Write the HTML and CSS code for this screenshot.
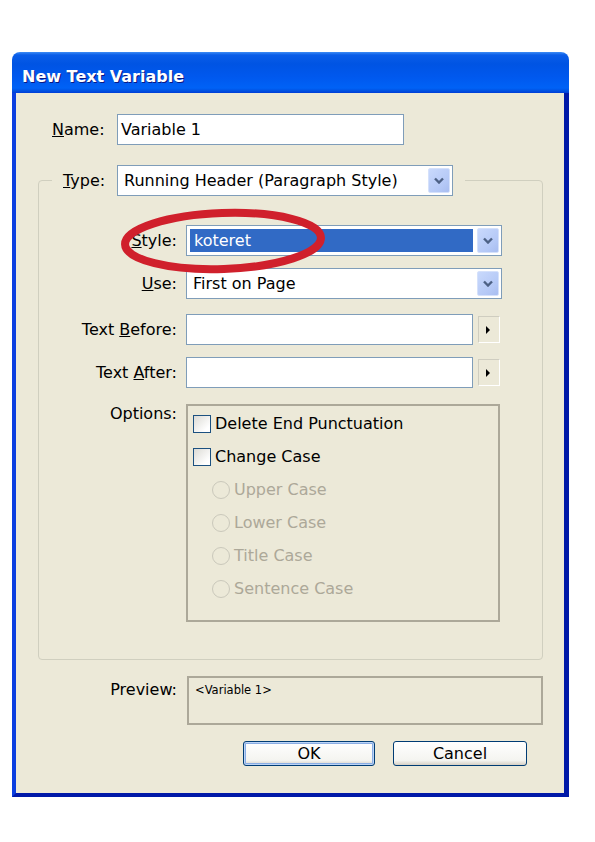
FILE: index.html
```html
<!DOCTYPE html>
<html lang="en">
<head>
  <meta charset="UTF-8" />
  <title>New Text Variable</title>
  <link rel="stylesheet" href="styles.css">
</head>
<body>

  <div class="window">
    <div class="titlebar">New Text Variable</div>

    <div class="client">
      <div class="name-row">
        <label class="name-label"><u>N</u>ame:</label>
        <div class="field name-field">Variable 1</div>
      </div>

      <fieldset class="group">
        <legend class="type-row">
          <label class="type-label"><u>T</u>ype:</label>
          <div class="combo type-combo">
            <span class="combo-value">Running Header (Paragraph Style)</span>
            <span class="drop-btn">
              <svg width="10" height="7" viewBox="0 0 10 7"><path d="M1 1.5 L5 5.5 L9 1.5" fill="none" stroke="#4d6185" stroke-width="2.4"/></svg>
            </span>
          </div>
        </legend>

        <div class="form-grid">
          <label class="row-label"><u>S</u>tyle:</label>
          <div class="combo">
            <span class="combo-value selected">koteret</span>
            <span class="drop-btn">
              <svg width="10" height="7" viewBox="0 0 10 7"><path d="M1 1.5 L5 5.5 L9 1.5" fill="none" stroke="#4d6185" stroke-width="2.4"/></svg>
            </span>
          </div>

          <label class="row-label"><u>U</u>se:</label>
          <div class="combo">
            <span class="combo-value">First on Page</span>
            <span class="drop-btn">
              <svg width="10" height="7" viewBox="0 0 10 7"><path d="M1 1.5 L5 5.5 L9 1.5" fill="none" stroke="#4d6185" stroke-width="2.4"/></svg>
            </span>
          </div>

          <label class="row-label push-3">Text <u>B</u>efore:</label>
          <div class="text-field push-3">
            <div class="field"></div>
            <span class="flyout-btn"><span class="tri"></span></span>
          </div>

          <label class="row-label">Text <u>A</u>fter:</label>
          <div class="text-field">
            <div class="field"></div>
            <span class="flyout-btn"><span class="tri"></span></span>
          </div>

          <label class="row-label options-label push-4">Options:</label>
          <div class="options push-4">
            <div class="opt"><span class="checkbox"></span>Delete End Punctuation</div>
            <div class="opt"><span class="checkbox"></span>Change Case</div>
            <div class="opt sub disabled"><span class="radio"></span>Upper Case</div>
            <div class="opt sub disabled"><span class="radio"></span>Lower Case</div>
            <div class="opt sub disabled"><span class="radio"></span>Title Case</div>
            <div class="opt sub disabled"><span class="radio"></span>Sentence Case</div>
          </div>
        </div>
      </fieldset>

      <div class="preview-row">
        <label class="preview-label">Preview:</label>
        <div class="preview-box">&lt;Variable 1&gt;</div>
      </div>

      <div class="buttons">
        <button class="btn default">OK</button>
        <button class="btn">Cancel</button>
      </div>
    </div>

    <!-- hand-drawn marker around the Style field -->
    <svg class="marker" width="215" height="75" viewBox="0 0 215 75">
      <ellipse cx="107" cy="37" rx="98" ry="28" transform="rotate(-2 107 37)" fill="none" stroke="#d0202c" stroke-width="8"/>
    </svg>
  </div>

</body>
</html>
```

FILE: styles.css
```css
body {
  margin: 0;
  background: #fff;
  font-family: 'DejaVu Sans', sans-serif;
  font-size: 16px;
  color: #000;
}

.window {
  position: relative;
  width: 557px;
  margin: 52px 0 0 12px;
}

.titlebar {
  box-sizing: border-box;
  height: 41px;
  padding: 15px 0 0 10px;
  border-radius: 8px 8px 0 0;
  background: linear-gradient(#3d8cf5 0, #0a5de8 3px, #0054e3 12px, #0058ee 60%, #0062f6 88%, #0050e0 95%, #003dd7 100%);
  color: #fff;
  font-weight: bold;
  font-size: 16px;
  line-height: 19px;
  text-shadow: 1px 1px #0a1883;
}

.client {
  background: #ece9d8;
  border-left: 4px solid #0b3fe0;
  border-right: 5px solid #0019a8;
  border-bottom: 4px solid #0019a8;
  padding: 21px 0 27px;
}

label {
  line-height: 19px;
  white-space: nowrap;
}

.field {
  box-sizing: border-box;
  height: 31px;
  background: #fff;
  border: 1px solid #7f9db9;
  padding: 0 3px;
  line-height: 29px;
}

/* name */
.name-row {
  display: flex;
  align-items: center;
  margin-left: 36px;
}

.name-label {
  width: 65px;
}

.name-field {
  width: 287px;
}

/* group */
.group {
  margin: 20px 0 0 22px;
  width: 504px;
  box-sizing: border-box;
  border: 1px solid #d0cfbf;
  border-radius: 4px;
  padding: 29px 40px 37px 13px;
}

.type-row {
  display: flex;
  align-items: center;
  padding: 0 12px 0 11px;
}

.type-label {
  width: 54px;
}

.type-combo {
  width: 336px;
}

.combo {
  box-sizing: border-box;
  height: 31px;
  display: flex;
  align-items: center;
  background: #fff;
  border: 1px solid #7f9db9;
  padding: 2px;
}

.combo-value {
  flex: 1;
  height: 23px;
  line-height: 23px;
  padding: 0 4px;
  margin-right: 4px;
  white-space: nowrap;
}

.combo-value.selected {
  background: #316ac5;
  color: #fff;
  margin-left: 1px;
}

.drop-btn {
  box-sizing: border-box;
  width: 22px;
  height: 25px;
  display: flex;
  align-items: center;
  justify-content: center;
  border: 1px solid #d5e1fb;
  border-radius: 2px;
  background: linear-gradient(135deg, #c9d9fc, #b4c8f6 70%, #a8bdf0);
}

.form-grid {
  display: grid;
  grid-template-columns: 125px 316px;
  column-gap: 9px;
  row-gap: 12px;
  align-items: center;
}

.row-label {
  text-align: right;
}

.push-3 {
  margin-top: 3px;
}

.push-4 {
  margin-top: 4px;
}

.options-label {
  align-self: start;
}

.text-field {
  display: flex;
  align-items: center;
  gap: 5px;
}

.text-field .field {
  width: 287px;
}

.flyout-btn {
  box-sizing: border-box;
  width: 22px;
  height: 27px;
  display: flex;
  align-items: center;
  justify-content: center;
  border: 1px solid;
  border-color: #cfcdc0 #fff #fff #cfcdc0;
}

.tri {
  width: 0;
  height: 0;
  border-top: 4px solid transparent;
  border-bottom: 4px solid transparent;
  border-left: 4px solid #000;
  margin-left: -2px;
}

/* options */
.options {
  box-sizing: border-box;
  width: 314px;
  height: 218px;
  border: 2px solid #aca899;
  padding: 1px 0 0 5px;
}

.opt {
  height: 33px;
  display: flex;
  align-items: center;
  gap: 4px;
  white-space: nowrap;
}

.opt.sub {
  padding-left: 19px;
}

.opt.disabled {
  color: #aca899;
}

.checkbox {
  box-sizing: border-box;
  width: 18px;
  height: 18px;
  border: 1px solid #1c5180;
  background: linear-gradient(135deg, #dcdbd5, #fff 80%);
}

.radio {
  box-sizing: border-box;
  width: 18px;
  height: 18px;
  border-radius: 50%;
  border: 1px solid #cac8bb;
  background: #ece9d8;
}

/* preview */
.preview-row {
  display: flex;
  align-items: flex-start;
  margin-top: 16px;
}

.preview-label {
  width: 161px;
  text-align: right;
  padding-top: 4px;
}

.preview-box {
  box-sizing: border-box;
  margin-left: 10px;
  width: 356px;
  height: 49px;
  border: 2px solid #aca899;
  padding: 6px 6px;
  font-size: 11.5px;
  line-height: 13px;
}

/* buttons */
.buttons {
  display: flex;
  justify-content: flex-end;
  gap: 18px;
  margin-top: 16px;
  padding-right: 37px;
}

.btn {
  box-sizing: border-box;
  width: 134px;
  height: 25px;
  font-family: 'DejaVu Sans', sans-serif;
  font-size: 16px;
  color: #000;
  border: 1px solid #003c74;
  border-radius: 3px;
  background: linear-gradient(#fff, #f4f4f0 80%, #d6d0c5);
  padding: 0;
}

.btn.default {
  width: 132px;
  box-shadow: inset 0 0 0 1px #bcd4f6, inset 0 0 0 2px #89ade4;
}

.marker {
  position: absolute;
  left: 104px;
  top: 152px;
}
```
